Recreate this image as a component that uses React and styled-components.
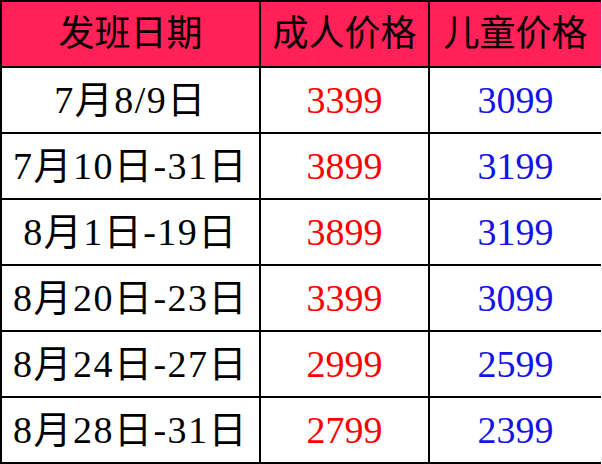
import styled, { createGlobalStyle } from "styled-components";

const GlobalStyle = createGlobalStyle`
  html, body {
    margin: 0;
    padding: 0;
    background: #ffffff;
  }
`;

const Table = styled.div`
  width: 601px;
  box-sizing: border-box;
  display: grid;
  grid-template-columns: 257px 167px 171px;
  grid-auto-rows: 64px;
  gap: 2px;
  padding: 2px;
  background: #000;
  font-family: "Liberation Serif", "Noto Sans CJK SC", serif;
`;

const Cell = styled.div`
  display: flex;
  align-items: center;
  justify-content: center;
  background: ${({ head }) => (head ? "#ff2157" : "#ffffff")};
  color: ${({ tone }) =>
    tone === "red" ? "#ff0000" : tone === "blue" ? "#1414e6" : "#000"};
  font-size: ${({ head }) => (head ? "36px" : "38px")};
  line-height: 1;
  white-space: nowrap;
  letter-spacing: ${({ wide }) => (wide ? "1.5px" : "0")};
`;

const rows = [
  ["7月8/9日", "3399", "3099"],
  ["7月10日-31日", "3899", "3199"],
  ["8月1日-19日", "3899", "3199"],
  ["8月20日-23日", "3399", "3099"],
  ["8月24日-27日", "2999", "2599"],
  ["8月28日-31日", "2799", "2399"],
];

function App() {
  return (
    <>
      <GlobalStyle />
      <Table>
        <Cell head>发班日期</Cell>
        <Cell head>成人价格</Cell>
        <Cell head>儿童价格</Cell>
        {rows.map((r, i) => [
          <Cell key={i + "d"} wide>
            {r[0]}
          </Cell>,
          <Cell key={i + "a"} tone="red">
            {r[1]}
          </Cell>,
          <Cell key={i + "c"} tone="blue">
            {r[2]}
          </Cell>,
        ])}
      </Table>
    </>
  );
}

export default App;
